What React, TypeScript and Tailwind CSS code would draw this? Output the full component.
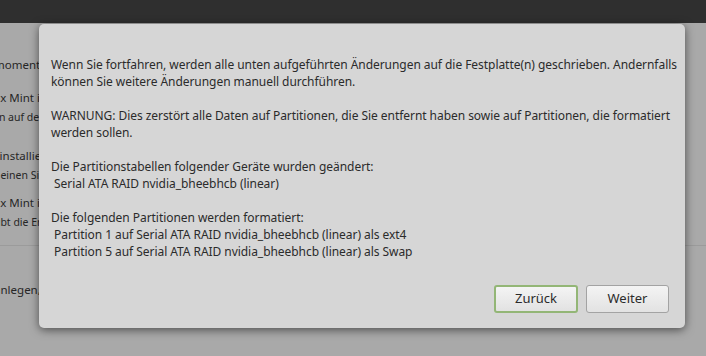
import React from "react";

const font = { fontFamily: '"Noto Sans", "Open Sans", sans-serif' };

export default function App() {
  return (
    <div className="relative w-[706px] h-[356px] overflow-hidden bg-[#a9a9a9] text-[#262626]" style={font}>
      {/* top panel */}
      <div className="h-[23px] bg-[#2f2f2f]" />

      {/* dimmed installer window behind the dialog */}
      <div className="flex flex-col pt-[33px] whitespace-nowrap">
        <div className="ml-[-6px] text-[11.5px] leading-[18px]">momentan kein Betriebssystem erkannt.</div>
        <div className="ml-[-23px] mt-[15px] text-[11.5px] leading-[18px]">Linux Mint installieren</div>
        <div className="ml-[-33px] mt-[2px] text-[10.5px] leading-[16px]">Dateien auf der Festplatte werden gelöscht.</div>
        <div className="ml-[-84px] mt-[22px] text-[11.5px] leading-[18px]">Linux Mint neu installieren</div>
        <div className="ml-[-153px] mt-[2px] text-[10.5px] leading-[16px]">Sie wählen im nächsten Schritt einen Sicherheitsschlüssel.</div>
        <div className="ml-[-23px] mt-[11px] text-[11.5px] leading-[18px]">Linux Mint in LVM einrichten</div>
        <div className="ml-[-49px] mt-[2px] text-[10.5px] leading-[16px]">Dies erlaubt die Erstellung von Schnappschüssen.</div>
        <div className="mt-[15px] h-px bg-[#9b9b9b]" />
        <div className="ml-[-69px] mt-[35px] text-[11.5px] leading-[18px]">Partitionen anlegen, entfernen oder ändern</div>
      </div>

      {/* modal dialog */}
      <div className="absolute left-[39px] top-[24px] w-[646px] h-[304px] flex flex-col rounded-[5px] bg-[#d6d6d6] shadow-[0_2px_10px_rgba(0,0,0,0.55)]">
        <div className="pt-[32px] pl-[12px] pr-3 text-[12px] leading-[17px] tracking-[-0.05px] text-[#2b2b2b] whitespace-pre">
          {`Wenn Sie fortfahren, werden alle unten aufgeführten Änderungen auf die Festplatte(n) geschrieben. Andernfalls
können Sie weitere Änderungen manuell durchführen.

WARNUNG: Dies zerstört alle Daten auf Partitionen, die Sie entfernt haben sowie auf Partitionen, die formatiert
werden sollen.

Die Partitionstabellen folgender Geräte wurden geändert:
 Serial ATA RAID nvidia_bheebhcb (linear)

Die folgenden Partitionen werden formatiert:
 Partition 1 auf Serial ATA RAID nvidia_bheebhcb (linear) als ext4
 Partition 5 auf Serial ATA RAID nvidia_bheebhcb (linear) als Swap`}
        </div>
        <div className="mt-auto flex justify-end gap-2 pr-4 pb-[15px]">
          <button className="w-[84px] h-[28px] rounded-[3px] border-2 border-[#93b676] bg-gradient-to-b from-[#f4f4f4] to-[#e2e2e2] text-[13px] text-[#2b2b2b]">
            Zurück
          </button>
          <button className="w-[83px] h-[28px] rounded-[3px] border border-[#a3a3a3] bg-gradient-to-b from-[#f4f4f4] to-[#e2e2e2] text-[13px] text-[#2b2b2b]">
            Weiter
          </button>
        </div>
      </div>
    </div>
  );
}
